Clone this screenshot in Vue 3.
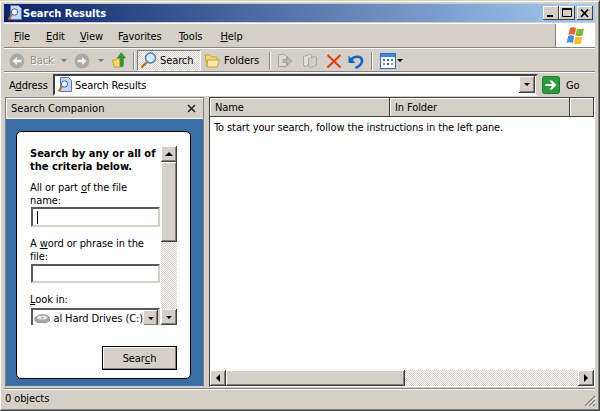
<template>
  <div class="window">
    <!-- title bar -->
    <div class="titlebar">
      <svg class="doc-icon" width="16" height="16" viewBox="0 0 16 16">
        <path d="M3.500 .5h8l3 3v11h-11z" fill="#c9d6f2" stroke="#5a70b0" />
        <circle cx="7.500" cy="7" r="3.200" fill="#eef6ff" stroke="#3f63b8" />
        <path d="M5 9.500 1.500 14.500" stroke="#c96a22" stroke-width="2" />
      </svg>
      <span class="title">Search Results</span>
      <div class="caption-btns">
        <div class="cap-btn"><svg width="12" height="10"><rect x="2" y="7" width="6" height="2" fill="#000" /></svg></div>
        <div class="cap-btn"><svg width="12" height="10"><path d="M1.500 .5h9v8h-9z" fill="none" stroke="#000" /><rect x="1" y="0" width="10" height="2" fill="#000" /></svg></div>
        <div class="cap-btn close"><svg width="10" height="9"><path d="M1 .5 8 8M8 .5 1 8" stroke="#000" stroke-width="1.600" fill="none" /></svg></div>
      </div>
    </div>

    <!-- menu -->
    <div class="menubar">
      <div class="menu-items">
        <span><u>F</u>ile</span>
        <span><u>E</u>dit</span>
        <span class="menu-view"><u>V</u>iew</span>
        <span class="menu-fav">F<u>a</u>vorites</span>
        <span class="menu-tools"><u>T</u>ools</span>
        <span class="menu-help"><u>H</u>elp</span>
      </div>
      <div class="flag">
        <svg width="22" height="20" viewBox="0 0 22 20">
          <path d="M5 2q3-1.500 6 0l-1.500 7q-3-1.500-6 0z" fill="#e8602c" />
          <path d="M12 2.500q3 1.500 7 0l-1.500 7q-4 1.500-7 0z" fill="#7cb83a" />
          <path d="M3.200 10q3-1.500 6 0L8 17q-3-1.500-6.500 0z" fill="#4a90d9" />
          <path d="M10.300 10.500q3 1.500 7 0L16 17.500q-4 1.500-7 0z" fill="#f5bd2a" />
        </svg>
      </div>
    </div>

    <!-- standard buttons -->
    <div class="toolbar">
      <svg class="ml-back" width="16" height="16" viewBox="0 0 16 16">
        <circle cx="8" cy="8" r="7.500" fill="#a9a9a5" />
        <path d="M12.500 6.800H8V4L3.500 8 8 12V9.200h4.500z" fill="#f2f2ef" />
      </svg>
      <span class="disabled back-label">Back</span>
      <i class="tiny-arrow grey back-arrow"></i>
      <svg class="ml-forward" width="16" height="16" viewBox="0 0 16 16">
        <circle cx="8" cy="8" r="7.500" fill="#a9a9a5" />
        <path d="M3.500 6.800H8V4l4.500 4L8 12V9.200H3.500z" fill="#f2f2ef" />
      </svg>
      <i class="tiny-arrow grey forward-arrow"></i>
      <svg class="up-icon" width="14" height="17" viewBox="0 0 16 19">
        <path d="M.5 9h4l1-1.500H9V17H2.500z" fill="#f6d76e" stroke="#b58a24" stroke-width=".8" />
        <path d="M9.500 16.500h2.500l1-1V6.500h2.500L10.500 .5 6 6.500h3.500z" fill="#2f9a32" stroke="#1d6f22" stroke-width=".5" />
      </svg>
      <div class="tb-sep sep-a"></div>
      <div class="search-btn">
        <svg width="17" height="17" viewBox="0 0 17 17">
          <circle cx="10.500" cy="6" r="5" fill="#d6ebfb" stroke="#4a78b8" stroke-width="1.400" />
          <path d="M7 10 1.500 15.500" stroke="#c4702a" stroke-width="2.400" />
        </svg>
        <span>Search</span>
      </div>
      <svg class="folders-icon" width="16" height="14" viewBox="0 0 16 14">
        <path d="M1 1h5l1.500 2H13v9H3z" fill="#f2d67c" stroke="#c9a23c" />
        <path d="M3.500 6H15.500l-2.500 7H3z" fill="#fbe9a8" stroke="#c9a23c" />
      </svg>
      <span class="folders-label">Folders</span>
      <div class="tb-sep sep-b"></div>
      <svg class="move-icon" width="16" height="16" viewBox="0 0 16 16">
        <path d="M1.500 1.500h6l2 2v10h-8z" fill="#dedbd4" stroke="#a4a29c" />
        <path d="M6 6.500h4V3.500l5 4.500-5 4.500v-3H6z" fill="#b8b6b0" stroke="#8f8d87" stroke-width=".6" />
      </svg>
      <svg class="copy-icon" width="16" height="16" viewBox="0 0 16 16">
        <path d="M1.500 3.500l6-2 2 1v8l-6 3-2-1z" fill="#e2dfd8" stroke="#a8a6a0" />
        <path d="M6.500 5.500l6-2 2 1v8l-6 2-2-1z" fill="#d0cdc6" stroke="#a8a6a0" />
      </svg>
      <svg class="delete-icon" width="16" height="16" viewBox="0 0 16 16">
        <path d="M1.500 2 14.500 14.500M14.500 2 1.500 14.500" stroke="#e8380f" stroke-width="2" fill="none" />
      </svg>
      <svg class="undo-icon" width="16" height="16" viewBox="0 0 16 16">
        <path d="M3.500 6.500C6 3 13.500 2.500 14 7.500c.3 3-3 6-6.500 7.500" fill="none" stroke="#1668c8" stroke-width="2.600" />
        <path d="M.5 2.500v7.500h7z" fill="#1668c8" />
      </svg>
      <div class="tb-sep sep-c"></div>
      <svg class="views-icon" width="16" height="16" viewBox="0 0 16 16">
        <rect x=".5" y=".5" width="15" height="15" fill="#f8fbff" stroke="#2c6fbf" />
        <rect x="1" y="1" width="14" height="3" fill="#3b86d6" />
        <rect x="3" y="6" width="2" height="2" fill="#3a62b0" /><rect x="7" y="6" width="2" height="2" fill="#3a62b0" /><rect x="11" y="6" width="2" height="2" fill="#3aa040" />
        <rect x="3" y="10" width="2" height="2" fill="#d9742c" /><rect x="7" y="10" width="2" height="2" fill="#3a62b0" /><rect x="11" y="10" width="2" height="2" fill="#d9a52c" />
      </svg>
      <i class="tiny-arrow views-arrow"></i>
    </div>

    <!-- address bar -->
    <div class="addressbar">
      <span class="addr-label">A<u>d</u>dress</span>
      <div class="addr-box">
        <svg width="16" height="16" viewBox="0 0 16 16">
          <path d="M3.500 .5h8l3 3v11h-11z" fill="#c9d6f2" stroke="#5a70b0" />
          <circle cx="7.500" cy="7" r="3.200" fill="#eef6ff" stroke="#3f63b8" />
          <path d="M5 9.500 1.500 14.500" stroke="#c96a22" stroke-width="2" />
        </svg>
        <span class="addr-text">Search Results</span>
        <div class="btn3d addr-drop"><i class="tiny-arrow"></i></div>
      </div>
      <div class="go-btn">
        <svg width="18" height="18" viewBox="0 0 18 18">
          <rect x=".5" y=".5" width="17" height="17" rx="2" fill="#2b9a3a" stroke="#1c7a2a" />
          <path d="M3.500 8h6.500L7.500 4.500H10l4.500 4.500L10 13.500H7.500L10 10H3.500z" fill="#fff" />
        </svg>
        <span>Go</span>
      </div>
    </div>

    <div class="panes">
      <!-- left pane -->
      <div class="companion">
        <div class="comp-head">
          <span>Search Companion</span>
          <svg width="9" height="9"><path d="M1 1 8 8M8 1 1 8" stroke="#222" stroke-width="1.500" /></svg>
        </div>
        <div class="comp-body">
          <div class="card">
            <div class="form-row">
              <div class="fields">
                <div class="heading">Search by any or all of the criteria below.</div>
                <div class="label first-label">All or part <u>o</u>f the file name:</div>
                <div class="field first-field"><i class="caret"></i></div>
                <div class="label second-label">A <u>w</u>ord or phrase in the file:</div>
                <div class="field"></div>
                <div class="label third-label"><u>L</u>ook in:</div>
                <div class="field select">
                  <svg width="18" height="11" viewBox="0 0 18 11">
                    <path d="M1 4.500 6 1.500h7l4 3V8l-4 2H4L1 8z" fill="#a8a8a8" stroke="#666" stroke-width=".6" />
                    <ellipse cx="9" cy="4.500" rx="5.500" ry="2.200" fill="#e8e8e8" />
                    <circle cx="9" cy="4.500" r="1" fill="#8a8a8a" />
                  </svg>
                  <span class="select-text">al Hard Drives (C:)</span>
                  <div class="btn3d select-drop"><i class="tiny-arrow"></i></div>
                </div>
              </div>
              <div class="vscroll">
                <div class="btn3d sb-btn"><i class="up-arrow"></i></div>
                <div class="btn3d sb-thumb"></div>
                <div class="sb-track"></div>
                <div class="btn3d sb-btn"><i class="tiny-arrow"></i></div>
              </div>
            </div>
            <div class="search-row">
              <div class="search-submit">Sear<u>c</u>h</div>
            </div>
          </div>
        </div>
      </div>

      <!-- right pane -->
      <div class="results">
        <div class="list-head">
          <div class="col col-name">Name</div>
          <div class="col col-folder">In Folder</div>
          <div class="col col-rest"></div>
        </div>
        <div class="list-body">To start your search, follow the instructions in the left pane.</div>
        <div class="hscroll">
          <div class="btn3d hs-btn"><i class="left-arrow"></i></div>
          <div class="btn3d hs-thumb"></div>
          <div class="sb-track"></div>
          <div class="btn3d hs-btn"><i class="right-arrow"></i></div>
        </div>
      </div>
    </div>

    <!-- status bar -->
    <div class="statusbar">
      <span>0 objects</span>
      <svg class="grip" width="12" height="12" viewBox="0 0 12 12">
        <path d="M11 1 1 11M11 5 5 11M11 9 9 11" stroke="#808080" stroke-width="1.200" fill="none" />
        <path d="M11.500 2.500 2.500 11.500M11.500 6.500 6.500 11.500" stroke="#fff" stroke-width=".8" fill="none" />
      </svg>
    </div>
  </div>
</template>

<script setup>
</script>

<style>
html, body { margin: 0; background: #d4d0c8; overflow: hidden; }
</style>

<style scoped>
.window {
  width: 600px;
  height: 411px;
  box-sizing: border-box;
  padding: 4px 4px 3px;
  background: #d4d0c8;
  border-top: 1px solid #d4d0c8;
  border-right: 1px solid #404040;
  border-bottom: 1px solid #404040;
  box-shadow: inset 1px 1px 0 #fff, inset -1px -1px 0 #808080;
  display: flex;
  flex-direction: column;
  font-family: "DejaVu Sans Condensed", "Liberation Sans", sans-serif;
  font-size: 11px;
  letter-spacing: -0.1px;
  color: #000;
  overflow: hidden;
}

.titlebar {
  height: 18px;
  margin-top: -1px;
  flex: none;
  display: flex;
  align-items: center;
  background: linear-gradient(90deg, #0a246a, #a6caf0);
  color: #fff;
  font-weight: bold;
  letter-spacing: 0;
  padding: 0 2px 0 3px;
}
.title { margin-left: 0; }
.caption-btns { margin-left: auto; display: flex; }
.cap-btn {
  width: 16px;
  height: 14px;
  box-sizing: border-box;
  background: #d4d0c8;
  box-shadow: inset -1px -1px 0 #404040, inset 1px 1px 0 #fff;
  display: flex;
  align-items: center;
  justify-content: center;
}
.cap-btn.close { margin-left: 2px; }

.menubar {
  height: 25px;
  margin-top: 1px;
  flex: none;
  box-sizing: border-box;
  border-top: 1px solid #fff;
  border-bottom: 1px solid #808080;
  display: flex;
  justify-content: space-between;
}
.menu-items { display: flex; align-items: center; gap: 16px; padding: 1px 0 0 10px; }
.menu-view { margin-left: -1px; }
.menu-fav { margin-left: -1px; }
.menu-tools { margin-left: 1px; }
.menu-help { margin-left: 2px; }
.flag {
  width: 39px;
  background: #fff;
  display: flex;
  align-items: center;
  justify-content: center;
  border-left: 1px solid #808080;
}

.toolbar {
  height: 24px;
  flex: none;
  box-sizing: border-box;
  border-top: 1px solid #fff;
  border-bottom: 1px solid #808080;
  padding-top: 1px;
  display: flex;
  align-items: center;
}
.ml-back { margin-left: 5px; }
.disabled { color: #8c8a84; text-shadow: 1px 1px 0 #fff; }
.back-label { margin-left: 5px; width: 23px; }
.back-arrow { margin-left: 8px; }
.ml-forward { margin-left: 7px; }
.forward-arrow { margin-left: 8px; }
.up-icon { margin-left: 8px; }
.tb-sep { width: 2px; height: 18px; flex: none; background: linear-gradient(90deg, #808080 50%, #fff 50%); }
.sep-a { margin-left: 7px; }
.search-btn {
  margin-left: 2px;
  width: 64px;
  height: 21px;
  box-sizing: border-box;
  padding-left: 2px;
  display: flex;
  align-items: center;
  gap: 3px;
  border: 1px solid;
  border-color: #808080 #fff #fff #808080;
  background: repeating-conic-gradient(#d4d0c8 0 25%, #fff 0 50%) 0 0 / 2px 2px;
}
.folders-icon { margin-left: 3px; }
.folders-label { margin-left: 4px; width: 36px; }
.sep-b { margin-left: 9px; }
.move-icon { margin-left: 6px; }
.copy-icon { margin-left: 9px; }
.delete-icon { margin-left: 8px; }
.undo-icon { margin-left: 6px; }
.sep-c { margin-left: 7px; }
.views-icon { margin-left: 7px; }
.views-arrow { margin-left: 1px; }

.tiny-arrow {
  display: block;
  width: 0;
  height: 0;
  border-left: 3px solid transparent;
  border-right: 3px solid transparent;
  border-top: 3px solid #000;
}
.tiny-arrow.grey { border-top-color: #77756f; }
.up-arrow {
  display: block;
  width: 0;
  height: 0;
  border-left: 4px solid transparent;
  border-right: 4px solid transparent;
  border-bottom: 4px solid #000;
}
.left-arrow, .right-arrow {
  display: block;
  width: 0;
  height: 0;
  border-top: 4px solid transparent;
  border-bottom: 4px solid transparent;
}
.left-arrow { border-right: 4px solid #000; }
.right-arrow { border-left: 4px solid #000; }

.addressbar {
  height: 25px;
  flex: none;
  box-sizing: border-box;
  border-top: 1px solid #fff;
  display: flex;
  align-items: center;
}
.addr-label { margin-left: 5px; width: 44px; }
.addr-box {
  width: 485px;
  height: 22px;
  box-sizing: border-box;
  padding: 1px;
  margin-top: -1px;
  background: #fff;
  border: 2px solid;
  border-color: #404040 #d4d0c8 #fff #404040;
  display: flex;
  align-items: center;
}
.addr-box svg { margin-left: 1px; flex: none; }
.addr-text { margin-left: 2px; padding-top: 1px; }
.btn3d {
  flex: none;
  box-sizing: border-box;
  background: #d4d0c8;
  box-shadow: inset -1px -1px 0 #404040, inset 1px 1px 0 #fff, inset -2px -2px 0 #808080;
  display: flex;
  align-items: center;
  justify-content: center;
}
.addr-drop { margin-left: auto; width: 16px; height: 17px; }
.go-btn { display: flex; align-items: center; margin-left: 4px; gap: 6px; }

.panes {
  flex: 1;
  min-height: 0;
  display: flex;
  gap: 5px;
  margin-left: 1px;
  margin-right: 0;
}

.companion {
  width: 199px;
  flex: none;
  box-sizing: border-box;
  border: 1px solid;
  border-color: #808080 #808080 #d4d0c8 #808080;
  box-shadow: inset 1px 1px 0 #fff;
  display: flex;
  flex-direction: column;
}
.comp-head {
  height: 21px;
  flex: none;
  box-sizing: border-box;
  padding: 1px 7px 0 5px;
  border-bottom: 1px solid #fff;
  letter-spacing: 0;
  display: flex;
  align-items: center;
  justify-content: space-between;
}
.comp-body {
  flex: 1;
  min-height: 0;
  background: #3a6ea5;
  padding: 12px 12px 7px 10px;
  display: flex;
}
.card {
  flex: 1;
  box-sizing: border-box;
  background: #fff;
  border: 1px solid #000;
  border-radius: 5px;
  padding: 14px 13px 8px 13px;
  display: flex;
  flex-direction: column;
}
.form-row { display: flex; gap: 1px; height: 179px; overflow: hidden; }
.fields { width: 130px; flex: none; }
.heading { font-weight: bold; line-height: 13px; margin-top: 1px; letter-spacing: 0; width: 129px; }
.label { line-height: 13px; width: 129px; }
.first-label { margin-top: 8px; }
.second-label { margin-top: 10px; }
.third-label { margin-top: 10px; }
.field {
  height: 19px;
  margin: 1px 0 0 1px;
  box-sizing: border-box;
  background: #fff;
  border: 2px solid;
  border-color: #5a5a5a #d4d0c8 #d4d0c8 #5a5a5a;
  display: flex;
  align-items: center;
  overflow: hidden;
}
.first-field { margin-top: 0; height: 20px; }
.caret { display: block; width: 1px; height: 13px; margin-left: 4px; background: #000; }
.select { margin-top: 2px; border-bottom: none; height: 18px; padding-left: 1px; }
.select-text { margin-left: 3px; white-space: nowrap; }
.select-drop { margin-left: auto; width: 15px; height: 16px; }

.vscroll { width: 16px; flex: none; display: flex; flex-direction: column; }
.sb-btn { width: 16px; height: 16px; }
.sb-thumb { height: 80px; }
.sb-track {
  flex: 1;
  background: repeating-conic-gradient(#d4d0c8 0 25%, #fff 0 50%) 0 0 / 2px 2px;
}
.search-row { display: flex; justify-content: flex-end; margin-top: 21px; }
.search-submit {
  width: 75px;
  height: 24px;
  box-sizing: border-box;
  background: #d4d0c8;
  border: 1px solid #000;
  box-shadow: inset -1px -1px 0 #808080, inset 1px 1px 0 #fff;
  display: flex;
  align-items: center;
  justify-content: center;
}
.search-submit u { text-decoration-thickness: 1px; }

.results {
  flex: 1;
  min-width: 0;
  box-sizing: border-box;
  border: 1px solid;
  border-color: #404040 #fff #fff #404040;
  display: flex;
  flex-direction: column;
  background: #fff;
}
.list-head { height: 19px; flex: none; display: flex; background: #d4d0c8; }
.col {
  box-sizing: border-box;
  padding-left: 5px;
  line-height: 19px;
  box-shadow: inset -1px -1px 0 #404040, inset 1px 1px 0 #fff;
}
.col-name { width: 180px; }
.col-folder { width: 180px; }
.col-rest { flex: 1; }
.list-body { flex: 1; padding: 4px 0 0 4px; line-height: 13px; }
.hscroll { height: 16px; flex: none; display: flex; }
.hs-btn { width: 16px; height: 16px; }
.hs-thumb { width: 179px; }

.statusbar {
  height: 19px;
  flex: none;
  margin-top: 1px;
  box-sizing: border-box;
  border-top: 1px solid #808080;
  box-shadow: inset 0 1px 0 #fff;
  padding-left: 1px;
  display: flex;
  align-items: center;
  justify-content: space-between;
}
.grip { margin-right: -1px; align-self: flex-end; }
</style>
